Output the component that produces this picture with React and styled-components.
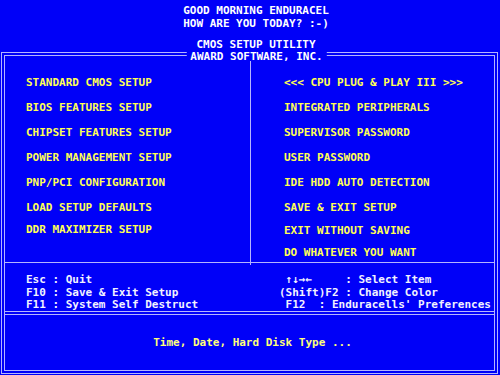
import * as React from "react";
import styled, { createGlobalStyle } from "styled-components";

const GlobalStyle = createGlobalStyle`
  html, body {
    margin: 0;
    padding: 0;
    background: #0000f8;
  }
  body {
    width: 500px;
    height: 375px;
    overflow: hidden;
    font: bold 11px "DejaVu Sans Mono", "Liberation Mono", monospace;
  }
`;

const leftMenu = [
  { label: "STANDARD CMOS SETUP" },
  { label: "BIOS FEATURES SETUP" },
  { label: "CHIPSET FEATURES SETUP" },
  { label: "POWER MANAGEMENT SETUP" },
  { label: "PNP/PCI CONFIGURATION" },
  { label: "LOAD SETUP DEFAULTS" },
  { label: "DDR MAXIMIZER SETUP", pull: 3 },
];

const rightMenu = [
  { label: "<<< CPU PLUG & PLAY III >>>" },
  { label: "INTEGRATED PERIPHERALS" },
  { label: "SUPERVISOR PASSWORD" },
  { label: "USER PASSWORD" },
  { label: "IDE HDD AUTO DETECTION" },
  { label: "SAVE & EXIT SETUP" },
  { label: "EXIT WITHOUT SAVING", pull: 2 },
  { label: "DO WHATEVER YOU WANT", pull: 3 },
];

function App() {
  return (
    <Screen>
      <GlobalStyle />
      <Header>
        <Greeting>GOOD MORNING ENDURACEL</Greeting>
        <Greeting>HOW ARE YOU TODAY? :-)</Greeting>
        <Utility>CMOS SETUP UTILITY</Utility>
      </Header>

      <Frame>
        <Legend>AWARD SOFTWARE, INC.</Legend>
        <Menu>
          <Column $pad={21}>
            {leftMenu.map((item) => (
              <Item key={item.label} $pull={item.pull}>
                {item.label}
              </Item>
            ))}
          </Column>
          <Column $pad={33} $divider>
            {rightMenu.map((item) => (
              <Item key={item.label} $pull={item.pull}>
                {item.label}
              </Item>
            ))}
          </Column>
        </Menu>

        <Keys>
          <KeyColumn $pad={21}>
            <KeyLine>Esc : Quit</KeyLine>
            <KeyLine>F10 : Save &amp; Exit Setup</KeyLine>
            <KeyLine>F11 : System Self Destruct</KeyLine>
          </KeyColumn>
          <KeyColumn $pad={29}>
            <KeyLine>{" \u2191\u2193\u2192\u2190     : Select Item"}</KeyLine>
            <KeyLine>(Shift)F2 : Change Color</KeyLine>
            <KeyLine>{" F12  : Enduracells' Preferences"}</KeyLine>
          </KeyColumn>
        </Keys>

        <Help>Time, Date, Hard Disk Type ...</Help>
      </Frame>
    </Screen>
  );
}

const Screen = styled.div`
  width: 500px;
  height: 375px;
  background: #0000f8;
`;

const Header = styled.div`
  box-sizing: border-box;
  height: 52px;
  padding: 4px 0 0 12px;
  text-align: center;
  color: #ffffff;
`;

const Greeting = styled.div`
  line-height: 13px;
  white-space: pre;
`;

const Utility = styled.div`
  margin-top: 8px;
  line-height: 13px;
`;

const Frame = styled.div`
  position: relative;
  box-sizing: border-box;
  width: 497px;
  height: 322px;
  margin-left: 1px;
  border: 4px double #b4b4ff;
  display: flex;
  flex-direction: column;
`;

const Legend = styled.div`
  position: absolute;
  top: -4px;
  left: 50%;
  transform: translateX(calc(-50% + 7px));
  padding: 0 4px;
  line-height: 9px;
  background: #0000f8;
  color: #ffffff;
  white-space: pre;
`;

const Menu = styled.div`
  box-sizing: border-box;
  height: 207px;
  display: grid;
  grid-template-columns: 245px 1fr;
  border-bottom: 1px solid #b4b4ff;
`;

const Column = styled.div`
  padding: 14px 0 0 ${(p) => p.$pad}px;
  border-left: ${(p) => (p.$divider ? "1px solid #b4b4ff" : "none")};
`;

const Item = styled.div`
  line-height: 25px;
  margin-top: ${(p) => (p.$pull ? -p.$pull : 0)}px;
  color: #ffff55;
  white-space: pre;
`;

const Keys = styled.div`
  box-sizing: border-box;
  height: 52px;
  display: grid;
  grid-template-columns: 245px 1fr;
  padding-top: 11px;
  border-bottom: 4px double #b4b4ff;
`;

const KeyColumn = styled.div`
  padding-left: ${(p) => p.$pad}px;
`;

const KeyLine = styled.div`
  line-height: 12.5px;
  color: #f2f2ff;
  white-space: pre;
`;

const Help = styled.div`
  flex: 1;
  display: flex;
  align-items: center;
  justify-content: center;
  padding-left: 6px;
  color: #ffff7a;
`;

export default App;
